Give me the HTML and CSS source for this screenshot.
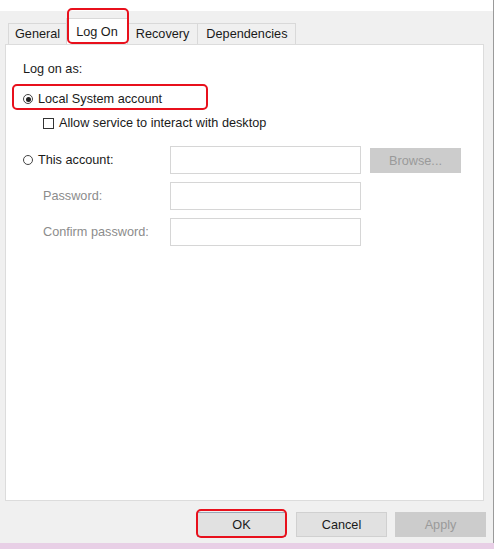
FILE: index.html
```html
<!DOCTYPE html>
<html lang="en">
<head>
  <meta charset="UTF-8">
  <title>Service Properties - Log On</title>
  <link rel="stylesheet" href="styles.css">
</head>
<body>
  <div class="window">
    <div class="topstrip"></div>
    <div class="tabs">
      <div class="tab first">General</div>
      <div class="tab active">Log On</div>
      <div class="tab">Recovery</div>
      <div class="tab">Dependencies</div>
      <div class="mark mark-tab"></div>
    </div>
    <div class="panel">
      <div class="heading">Log on as:</div>
      <div class="option local">
        <span class="radio checked"></span>
        <span>Local System account</span>
        <div class="mark mark-local"></div>
      </div>
      <div class="option sub">
        <span class="check"></span>
        <span>Allow service to interact with desktop</span>
      </div>
      <div class="account">
        <div class="option">
          <span class="radio"></span>
          <span>This account:</span>
        </div>
        <div class="field"></div>
        <div class="btn disabled">Browse...</div>
        <div class="label">Password:</div>
        <div class="field"></div>
        <div></div>
        <div class="label">Confirm password:</div>
        <div class="field"></div>
      </div>
    </div>
    <div class="actions">
      <div class="btn ok">OK<div class="mark mark-ok"></div></div>
      <div class="btn">Cancel</div>
      <div class="btn disabled">Apply</div>
    </div>
  </div>
  <div class="taskbar"></div>
</body>
</html>
```

FILE: styles.css
```css
body {
  margin: 0;
  font-family: "Liberation Sans", Arial, sans-serif;
  font-size: 12.7px;
  color: #1a1a1a;
  background: #f0f0f0;
  width: 494px;
  height: 549px;
  overflow: hidden;
}
.window {
  width: 493px;
  height: 543px;
  border-right: 1px solid #9a9a9a;
  background: #f0f0f0;
}
.topstrip {
  height: 11px;
  background: white;
}
.tabs {
  position: relative;
  display: flex;
  align-items: flex-end;
  height: 33px;
  padding-left: 8px;
}
.tab {
  height: 20px;
  line-height: 20px;
  padding: 0 8px;
  border: 1px solid #d9d9d9;
  border-bottom: none;
  margin-right: -1px;
  background: #f0f0f0;
}
.tab.first {
  padding: 0 6px;
}
.tab.active {
  height: 25px;
  line-height: 27px;
  background: white;
  padding: 0 9px;
  position: relative;
  z-index: 1;
}
.panel {
  margin-left: 5px;
  width: 479px;
  height: 457px;
  background: white;
  border: 1px solid #dcdcdc;
  padding-top: 16px;
  box-sizing: border-box;
}
.heading {
  padding-left: 17px;
  line-height: 16px;
  margin-bottom: 14px;
}
.option {
  display: flex;
  align-items: center;
  gap: 5px;
  line-height: 16px;
}
.local {
  position: relative;
  padding-left: 17px;
}
.sub {
  padding-left: 37px;
  margin-top: 8px;
}
.radio {
  width: 8px;
  height: 8px;
  border: 1px solid #444;
  border-radius: 50%;
  display: inline-block;
  position: relative;
}
.radio.checked::after {
  content: "";
  position: absolute;
  left: 1.5px;
  top: 1.5px;
  width: 5px;
  height: 5px;
  border-radius: 50%;
  background: #222;
}
.check {
  width: 9px;
  height: 9px;
  border: 1px solid #333;
  display: inline-block;
}
.account {
  display: grid;
  grid-template-columns: 138px 191px 91px;
  grid-auto-rows: 28px;
  column-gap: 9px;
  row-gap: 8px;
  padding-left: 17px;
  margin-top: 15px;
  align-items: center;
}
.field {
  height: 26px;
  border: 1px solid #d6d6d6;
  background: white;
}
.label {
  padding-left: 20px;
  color: #8c8c8c;
}
.btn {
  height: 25px;
  line-height: 25px;
  text-align: center;
  background: #e1e1e1;
  border: 1px solid #d0d0d0;
  box-sizing: border-box;
}
.btn.disabled {
  background: #cccccc;
  border-color: #cccccc;
  color: #9a9a9a;
}
.actions {
  display: flex;
  justify-content: flex-end;
  gap: 8px;
  padding: 11px 7px 0 0;
}
.actions .btn {
  width: 91px;
}
.btn.ok {
  position: relative;
  border-color: #9aa7b8;
  width: 89px;
  margin-right: 2px;
}
.taskbar {
  height: 6px;
  background: #e8cfe6;
}
/* red annotation outlines */
.mark {
  position: absolute;
  border: 2px solid #e8101c;
  border-radius: 5px;
  pointer-events: none;
}
.mark-tab {
  left: 67px;
  top: -3px;
  width: 58px;
  height: 32px;
  z-index: 2;
}
.mark-local {
  left: 6px;
  top: -7px;
  width: 192px;
  height: 22px;
}
.mark-ok {
  left: -2px;
  top: -4px;
  width: 87px;
  height: 25px;
}
```
